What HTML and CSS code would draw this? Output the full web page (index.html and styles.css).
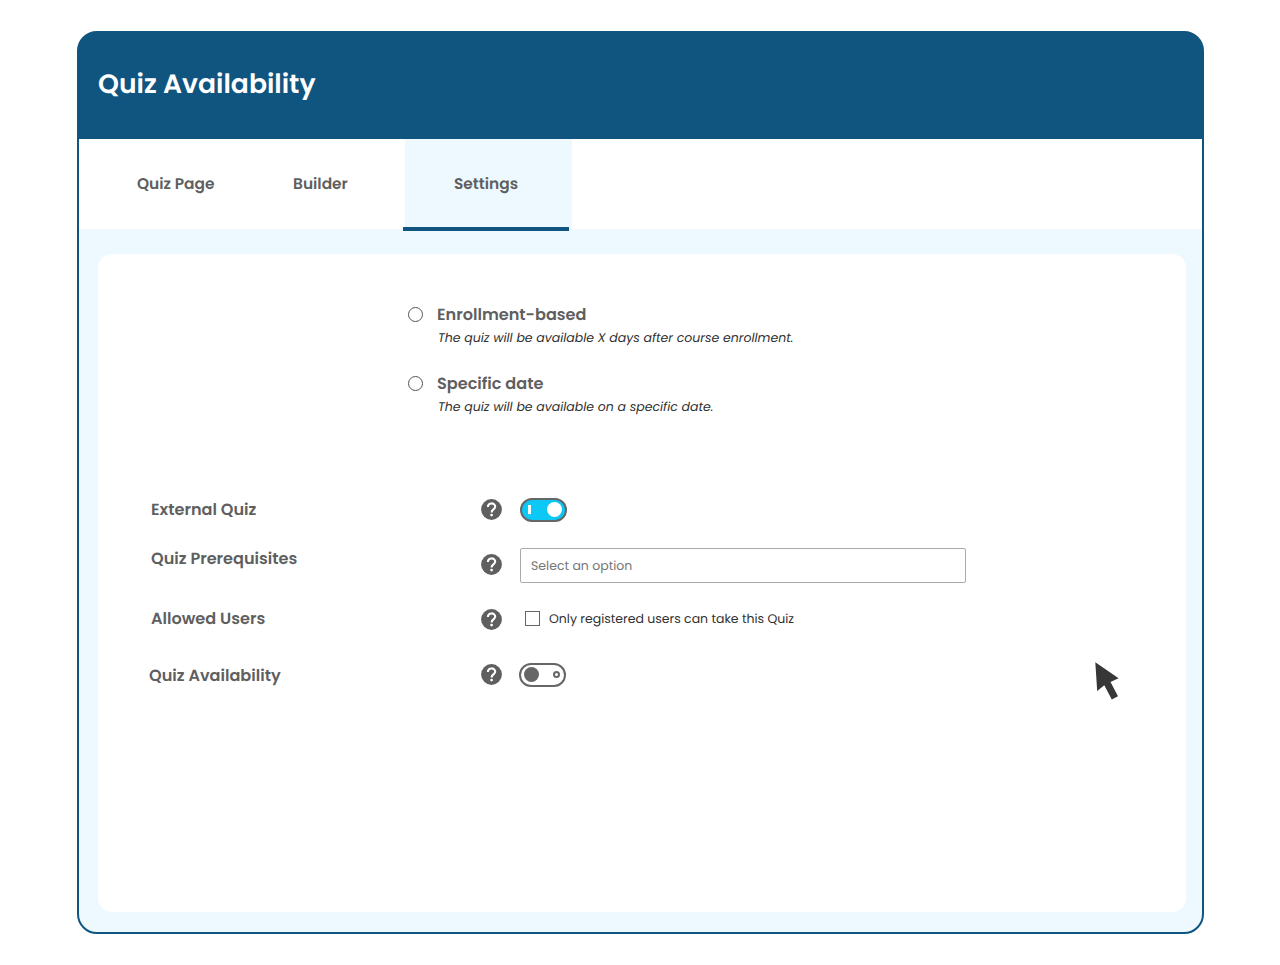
FILE: index.html
```html
<!DOCTYPE html>
<html lang="en">

<head>
    <meta charset="UTF-8">
    <meta name="viewport" content="width=device-width, initial-scale=1.0">
    <title>Quiz Availability</title>
    <link rel="stylesheet" href="styles.css">
</head>

<body>
    <div class="window">
        <header class="header">
            <h1>Quiz Availability</h1>
        </header>

        <!-- Tabs -->
        <nav class="tabs">
            <a class="tab tab-page">Quiz Page</a>
            <a class="tab tab-builder">Builder</a>
            <a class="tab tab-settings active">Settings</a>
        </nav>

        <main class="content">
            <div class="panel">
                <!-- Availability options -->
                <div class="options">
                    <div class="option">
                        <span class="radio"></span>
                        <div>
                            <div class="option-title">Enrollment-based</div>
                            <p>The quiz will be available X days after course enrollment.</p>
                        </div>
                    </div>
                    <div class="option">
                        <span class="radio"></span>
                        <div>
                            <div class="option-title">Specific date</div>
                            <p>The quiz will be available on a specific date.</p>
                        </div>
                    </div>
                </div>

                <!-- Settings -->
                <div class="settings">
                    <div class="row">
                        <span class="label">External Quiz</span>
                        <svg class="help" viewBox="0 0 21 21">
                            <circle cx="10.5" cy="10.5" r="10.4" fill="#5f5f5f" />
                            <path d="M6.9 8C6.9 3.2 14.2 3.4 14.2 7.6C14.2 10.5 10.6 10.2 10.6 13.4" fill="none" stroke="#fff" stroke-width="2.1" />
                            <circle cx="10.6" cy="16.1" r="1.4" fill="#fff" />
                        </svg>
                        <div class="toggle on"><span class="bar"></span><span class="knob"></span></div>
                    </div>
                    <div class="row">
                        <span class="label prerequisites">Quiz Prerequisites</span>
                        <svg class="help" viewBox="0 0 21 21">
                            <circle cx="10.5" cy="10.5" r="10.4" fill="#5f5f5f" />
                            <path d="M6.9 8C6.9 3.2 14.2 3.4 14.2 7.6C14.2 10.5 10.6 10.2 10.6 13.4" fill="none" stroke="#fff" stroke-width="2.1" />
                            <circle cx="10.6" cy="16.1" r="1.4" fill="#fff" />
                        </svg>
                        <div class="select">Select an option</div>
                    </div>
                    <div class="row">
                        <span class="label users">Allowed Users</span>
                        <svg class="help" viewBox="0 0 21 21">
                            <circle cx="10.5" cy="10.5" r="10.4" fill="#5f5f5f" />
                            <path d="M6.9 8C6.9 3.2 14.2 3.4 14.2 7.6C14.2 10.5 10.6 10.2 10.6 13.4" fill="none" stroke="#fff" stroke-width="2.1" />
                            <circle cx="10.6" cy="16.1" r="1.4" fill="#fff" />
                        </svg>
                        <div class="check"><span class="checkbox"></span><span class="check-text">Only registered users can take this Quiz</span></div>
                    </div>
                    <div class="row">
                        <span class="label availability">Quiz Availability</span>
                        <svg class="help" viewBox="0 0 21 21">
                            <circle cx="10.5" cy="10.5" r="10.4" fill="#5f5f5f" />
                            <path d="M6.9 8C6.9 3.2 14.2 3.4 14.2 7.6C14.2 10.5 10.6 10.2 10.6 13.4" fill="none" stroke="#fff" stroke-width="2.1" />
                            <circle cx="10.6" cy="16.1" r="1.4" fill="#fff" />
                        </svg>
                        <div class="toggle off"><span class="knob"></span><span class="ring"></span></div>
                    </div>
                </div>
            </div>
        </main>
    </div>

    <!-- Mouse pointer -->
    <svg class="cursor" viewBox="0 0 24 38">
        <path d="M0.3 0.3L23.6 16.2L15.5 20L23 34.3L16.8 37.5L9.3 23.2L2.2 29Z" fill="#373737" />
    </svg>
</body>

</html>
```

FILE: styles.css
```css
* {
    box-sizing: border-box;
}

body {
    margin: 0;
    padding: 31px 0 0 77px;
    background: #fff;
    color: #5f5f5f;
    font-family: Poppins, Inter, sans-serif;
    text-rendering: geometricPrecision;
}

.window {
    display: flex;
    flex-direction: column;
    width: 1127px;
    height: 903px;
    border: 2px solid #10557f;
    border-radius: 20px;
    background: linear-gradient(#10557f 106px, #edf9fe 106px);
    overflow: hidden;
}

.header {
    display: flex;
    align-items: center;
    height: 106px;
    padding: 0 0 2px 19px;
}

h1 {
    margin: 0;
    color: #fff;
    font-size: 26.6px;
    font-weight: 600;
    line-height: 40px;
}

/* Tabs */
.tabs {
    display: flex;
    height: 90px;
    background: #fff;
}

.tab {
    position: relative;
    padding-top: 33px;
    font-size: 15.4px;
    font-weight: 600;
    line-height: 25px;
    white-space: nowrap;
}

.tab-page {
    width: 156px;
    margin-left: 58px;
}

.tab-builder {
    width: 112px;
}

.tab-settings {
    width: 167px;
    padding-left: 49px;
}

.tab.active {
    background: #edf9fe;
}

.tab.active::after {
    content: "";
    position: absolute;
    left: -2px;
    bottom: -2px;
    width: 166px;
    height: 4px;
    background: #10557f;
}

.content {
    flex: 1;
    padding: 25px 16px 20px 19px;
}

.panel {
    height: 100%;
    border-radius: 14px;
    background: #fff;
}

/* Radio options */
.options {
    height: 228px;
    padding: 49px 0 0 310px;
}

.option {
    display: flex;
    height: 69px;
}

.radio {
    width: 15px;
    height: 15px;
    margin: 3.5px 14px 0 0;
    border: 1px solid #555;
    border-radius: 50%;
}

.option-title {
    font-size: 16.1px;
    font-weight: 600;
    line-height: 24px;
}

.option p {
    margin: 1px 0 0 1px;
    color: #303030;
    font-size: 12.5px;
    font-style: italic;
    line-height: 22px;
}

/* Settings rows */
.row {
    display: grid;
    grid-template-columns: 330px 39px 1fr;
    align-items: center;
    height: 55px;
    padding-left: 53px;
}

.label {
    font-size: 16.1px;
    font-weight: 600;
    line-height: 24px;
}

.prerequisites {
    margin-bottom: 11px;
}

.users {
    margin-bottom: 2px;
}

.availability {
    margin: 2px 0 0 -2px;
}

.help {
    width: 21px;
    height: 21px;
}

.toggle {
    display: flex;
    align-items: center;
    justify-content: space-between;
    width: 47px;
    height: 24px;
    border: 2px solid #666;
    border-radius: 12px;
}

.toggle.on {
    padding: 0 3px 0 6px;
    background: #0cc8f4;
}

.toggle.off {
    margin-left: -1px;
    padding: 0 4px 0 3px;
}

.bar {
    width: 3px;
    height: 9px;
    background: #fff;
}

.knob {
    width: 15px;
    height: 15px;
    border-radius: 50%;
    background: #666;
}

.on .knob {
    background: #fff;
}

.ring {
    width: 7px;
    height: 7px;
    border: 2px solid #666;
    border-radius: 50%;
}

.select {
    display: flex;
    align-items: center;
    width: 446px;
    height: 35px;
    margin-top: 2px;
    padding: 2px 0 0 10px;
    border: 1px solid #aaa;
    border-radius: 2px;
    color: #757575;
    font-size: 12.5px;
}

.check {
    display: flex;
    align-items: center;
    gap: 9px;
    height: 22px;
    margin-bottom: 2px;
    padding-left: 5px;
    color: #303030;
    font-size: 12.5px;
}

.check-text {
    padding-top: 2px;
}

.checkbox {
    width: 15px;
    height: 15px;
    border: 1px solid #666;
}

.cursor {
    position: absolute;
    left: 1095px;
    top: 662px;
    width: 24px;
    height: 38px;
}
```
